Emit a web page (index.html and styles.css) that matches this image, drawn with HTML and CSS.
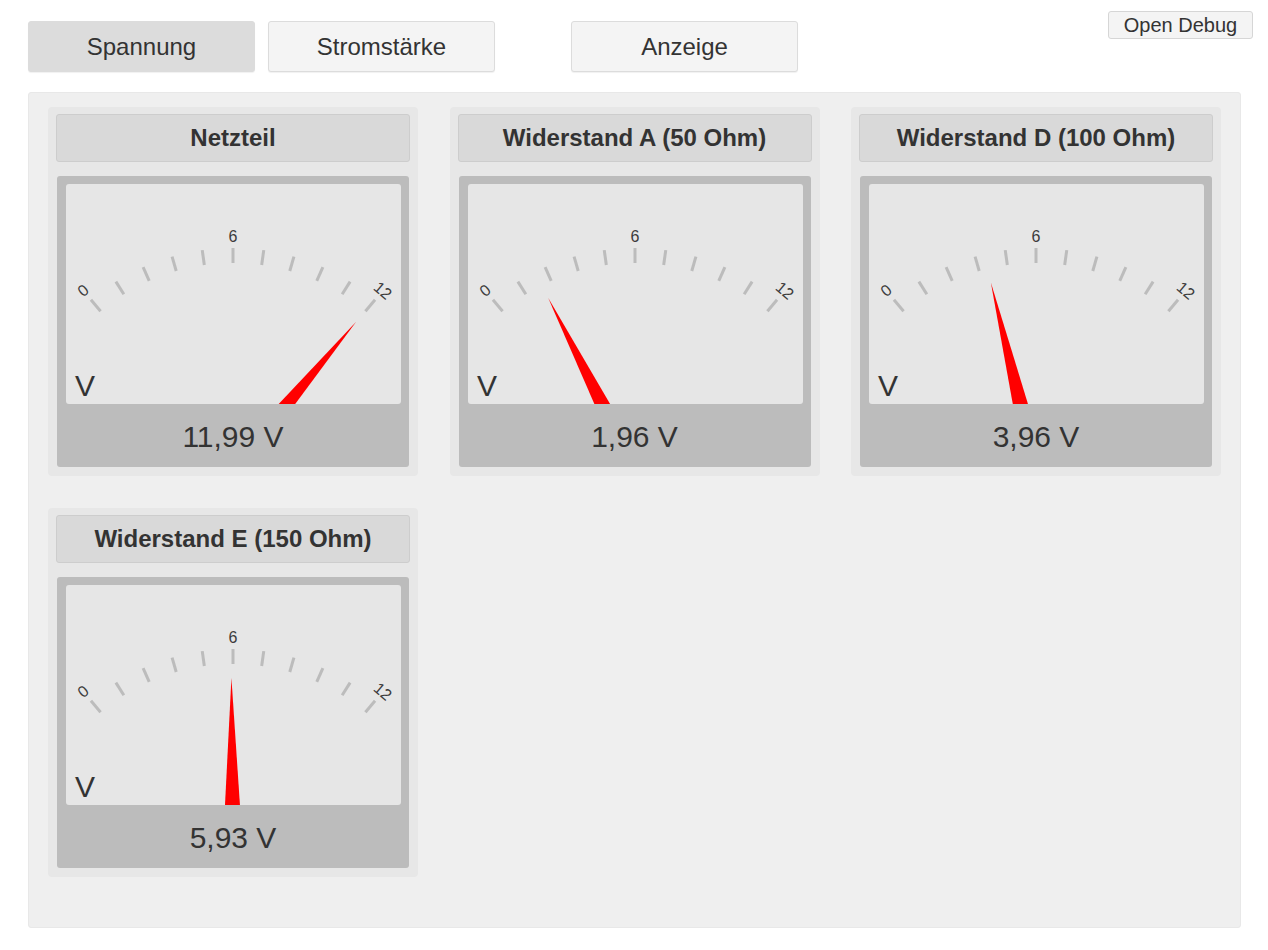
FILE: index.html
```html
<!DOCTYPE html>
<html lang="de">
<head>
<meta charset="utf-8">
<title>Spannung</title>
<link rel="stylesheet" href="styles.css">
</head>
<body>
<div class="page">
  <nav class="tabs">
    <button class="tab active">Spannung</button>
    <button class="tab">Stromstärke</button>
    <button class="tab tab-far">Anzeige</button>
  </nav>
  <button class="debug">Open Debug</button>
  <main class="panel">
    <section class="card">
      <h2 class="card-title">Netzteil</h2>
      <div class="frame">
        <svg class="dial" width="335" height="220" viewBox="0 0 335 220">
          <g transform="translate(167 285)">
            <g class="ticks">
              <line transform="rotate(-40)" x1="0" y1="-206" x2="0" y2="-221"/>
              <line transform="rotate(-32)" x1="0" y1="-206" x2="0" y2="-221"/>
              <line transform="rotate(-24)" x1="0" y1="-206" x2="0" y2="-221"/>
              <line transform="rotate(-16)" x1="0" y1="-206" x2="0" y2="-221"/>
              <line transform="rotate(-8)" x1="0" y1="-206" x2="0" y2="-221"/>
              <line transform="rotate(0)" x1="0" y1="-206" x2="0" y2="-221"/>
              <line transform="rotate(8)" x1="0" y1="-206" x2="0" y2="-221"/>
              <line transform="rotate(16)" x1="0" y1="-206" x2="0" y2="-221"/>
              <line transform="rotate(24)" x1="0" y1="-206" x2="0" y2="-221"/>
              <line transform="rotate(32)" x1="0" y1="-206" x2="0" y2="-221"/>
              <line transform="rotate(40)" x1="0" y1="-206" x2="0" y2="-221"/>
            </g>
            <text class="mark" transform="rotate(-40) translate(0 -233)">0</text>
            <text class="mark" transform="translate(0 -233)">6</text>
            <text class="mark" transform="rotate(40) translate(0 -233)">12</text>
            <polygon class="needle" transform="rotate(39.9)" points="-11.3,0 11.3,0 0,-192"/>
          </g>
          <text class="unit" x="9" y="212">V</text>
        </svg>
        <div class="value">11,99 V</div>
      </div>
    </section>

    <section class="card">
      <h2 class="card-title">Widerstand A (50 Ohm)</h2>
      <div class="frame">
        <svg class="dial" width="335" height="220" viewBox="0 0 335 220">
          <g transform="translate(167 285)">
            <g class="ticks">
              <line transform="rotate(-40)" x1="0" y1="-206" x2="0" y2="-221"/>
              <line transform="rotate(-32)" x1="0" y1="-206" x2="0" y2="-221"/>
              <line transform="rotate(-24)" x1="0" y1="-206" x2="0" y2="-221"/>
              <line transform="rotate(-16)" x1="0" y1="-206" x2="0" y2="-221"/>
              <line transform="rotate(-8)" x1="0" y1="-206" x2="0" y2="-221"/>
              <line transform="rotate(0)" x1="0" y1="-206" x2="0" y2="-221"/>
              <line transform="rotate(8)" x1="0" y1="-206" x2="0" y2="-221"/>
              <line transform="rotate(16)" x1="0" y1="-206" x2="0" y2="-221"/>
              <line transform="rotate(24)" x1="0" y1="-206" x2="0" y2="-221"/>
              <line transform="rotate(32)" x1="0" y1="-206" x2="0" y2="-221"/>
              <line transform="rotate(40)" x1="0" y1="-206" x2="0" y2="-221"/>
            </g>
            <text class="mark" transform="rotate(-40) translate(0 -233)">0</text>
            <text class="mark" transform="translate(0 -233)">6</text>
            <text class="mark" transform="rotate(40) translate(0 -233)">12</text>
            <polygon class="needle" transform="rotate(-26.9)" points="-11.3,0 11.3,0 0,-192"/>
          </g>
          <text class="unit" x="9" y="212">V</text>
        </svg>
        <div class="value">1,96 V</div>
      </div>
    </section>

    <section class="card">
      <h2 class="card-title">Widerstand D (100 Ohm)</h2>
      <div class="frame">
        <svg class="dial" width="335" height="220" viewBox="0 0 335 220">
          <g transform="translate(167 285)">
            <g class="ticks">
              <line transform="rotate(-40)" x1="0" y1="-206" x2="0" y2="-221"/>
              <line transform="rotate(-32)" x1="0" y1="-206" x2="0" y2="-221"/>
              <line transform="rotate(-24)" x1="0" y1="-206" x2="0" y2="-221"/>
              <line transform="rotate(-16)" x1="0" y1="-206" x2="0" y2="-221"/>
              <line transform="rotate(-8)" x1="0" y1="-206" x2="0" y2="-221"/>
              <line transform="rotate(0)" x1="0" y1="-206" x2="0" y2="-221"/>
              <line transform="rotate(8)" x1="0" y1="-206" x2="0" y2="-221"/>
              <line transform="rotate(16)" x1="0" y1="-206" x2="0" y2="-221"/>
              <line transform="rotate(24)" x1="0" y1="-206" x2="0" y2="-221"/>
              <line transform="rotate(32)" x1="0" y1="-206" x2="0" y2="-221"/>
              <line transform="rotate(40)" x1="0" y1="-206" x2="0" y2="-221"/>
            </g>
            <text class="mark" transform="rotate(-40) translate(0 -233)">0</text>
            <text class="mark" transform="translate(0 -233)">6</text>
            <text class="mark" transform="rotate(40) translate(0 -233)">12</text>
            <polygon class="needle" transform="rotate(-13.6)" points="-11.3,0 11.3,0 0,-192"/>
          </g>
          <text class="unit" x="9" y="212">V</text>
        </svg>
        <div class="value">3,96 V</div>
      </div>
    </section>

    <section class="card">
      <h2 class="card-title">Widerstand E (150 Ohm)</h2>
      <div class="frame">
        <svg class="dial" width="335" height="220" viewBox="0 0 335 220">
          <g transform="translate(167 285)">
            <g class="ticks">
              <line transform="rotate(-40)" x1="0" y1="-206" x2="0" y2="-221"/>
              <line transform="rotate(-32)" x1="0" y1="-206" x2="0" y2="-221"/>
              <line transform="rotate(-24)" x1="0" y1="-206" x2="0" y2="-221"/>
              <line transform="rotate(-16)" x1="0" y1="-206" x2="0" y2="-221"/>
              <line transform="rotate(-8)" x1="0" y1="-206" x2="0" y2="-221"/>
              <line transform="rotate(0)" x1="0" y1="-206" x2="0" y2="-221"/>
              <line transform="rotate(8)" x1="0" y1="-206" x2="0" y2="-221"/>
              <line transform="rotate(16)" x1="0" y1="-206" x2="0" y2="-221"/>
              <line transform="rotate(24)" x1="0" y1="-206" x2="0" y2="-221"/>
              <line transform="rotate(32)" x1="0" y1="-206" x2="0" y2="-221"/>
              <line transform="rotate(40)" x1="0" y1="-206" x2="0" y2="-221"/>
            </g>
            <text class="mark" transform="rotate(-40) translate(0 -233)">0</text>
            <text class="mark" transform="translate(0 -233)">6</text>
            <text class="mark" transform="rotate(40) translate(0 -233)">12</text>
            <polygon class="needle" transform="rotate(-0.47)" points="-11.3,0 11.3,0 0,-192"/>
          </g>
          <text class="unit" x="9" y="212">V</text>
        </svg>
        <div class="value">5,93 V</div>
      </div>
    </section>
  </main>
</div>
</body>
</html>
```
FILE: styles.css
```css
* { box-sizing: border-box; }

html, body {
  margin: 0;
  padding: 0;
  background: #ffffff;
}

body {
  font-family: "Liberation Sans", Arial, sans-serif;
  color: #333333;
}

.page {
  position: relative;
  width: 1268px;
  height: 950px;
  padding: 21px 27px 0 28px;
}

.tabs {
  display: flex;
  gap: 13px;
  height: 51px;
}

.tab {
  width: 227px;
  height: 51px;
  border: 1px solid #dcdcdc;
  border-radius: 3px;
  background: #f4f4f4;
  font-family: "Liberation Sans", Arial, sans-serif;
  font-size: 24px;
  color: #333333;
  padding: 0;
  cursor: pointer;
  box-shadow: 0 1px 1px rgba(0,0,0,0.06);
}

.tab.active {
  background: #dcdcdc;
  border-color: #dcdcdc;
}

.tab-far {
  margin-left: 63px;
}

.debug {
  position: absolute;
  top: 11px;
  right: 15px;
  width: 145px;
  height: 28px;
  padding: 0;
  border: 1px solid #d6d6d6;
  border-radius: 3px;
  background: #f4f4f4;
  font-family: "Liberation Sans", Arial, sans-serif;
  font-size: 20px;
  line-height: 26px;
  color: #333333;
}

.panel {
  margin-top: 20px;
  width: 1213px;
  height: 836px;
  background: #efefef;
  border: 1px solid #e8e8e8;
  border-radius: 3px;
  padding: 14px 19px 0 19px;
  display: grid;
  grid-template-columns: repeat(3, 370px);
  grid-auto-rows: 369px;
  column-gap: 31.5px;
  row-gap: 32px;
  align-content: start;
}

.card {
  width: 370px;
  height: 369px;
  background: #e7e7e7;
  border-radius: 4px;
  padding: 7px 8px 9px 8px;
}

.card-title {
  margin: 0 0 14px 0;
  height: 48px;
  border: 1px solid #cdcdcd;
  border-radius: 3px;
  background: #d9d9d9;
  text-align: center;
  font-size: 24px;
  font-weight: bold;
  line-height: 46px;
  color: #333333;
}

.frame {
  margin-left: 1px;
  width: 352px;
  height: 291px;
  background: #bcbcbc;
  border-radius: 3px;
  padding: 8px 8px 0 9px;
}

.dial {
  display: block;
  background: #e6e6e6;
  border-radius: 3px;
}

.ticks line {
  stroke: #bcbcbc;
  stroke-width: 3;
}

.mark {
  font-family: "Liberation Sans", Arial, sans-serif;
  font-size: 16px;
  fill: #3c3c3c;
  text-anchor: middle;
  dominant-baseline: central;
}

.needle {
  fill: #ff0000;
}

.unit {
  font-family: "Liberation Sans", Arial, sans-serif;
  font-size: 30px;
  fill: #333333;
}

.value {
  height: 63px;
  padding-top: 2px;
  line-height: 61px;
  text-align: center;
  font-size: 30px;
  color: #333333;
  margin-left: -9px;
  margin-right: -8px;
}
```
